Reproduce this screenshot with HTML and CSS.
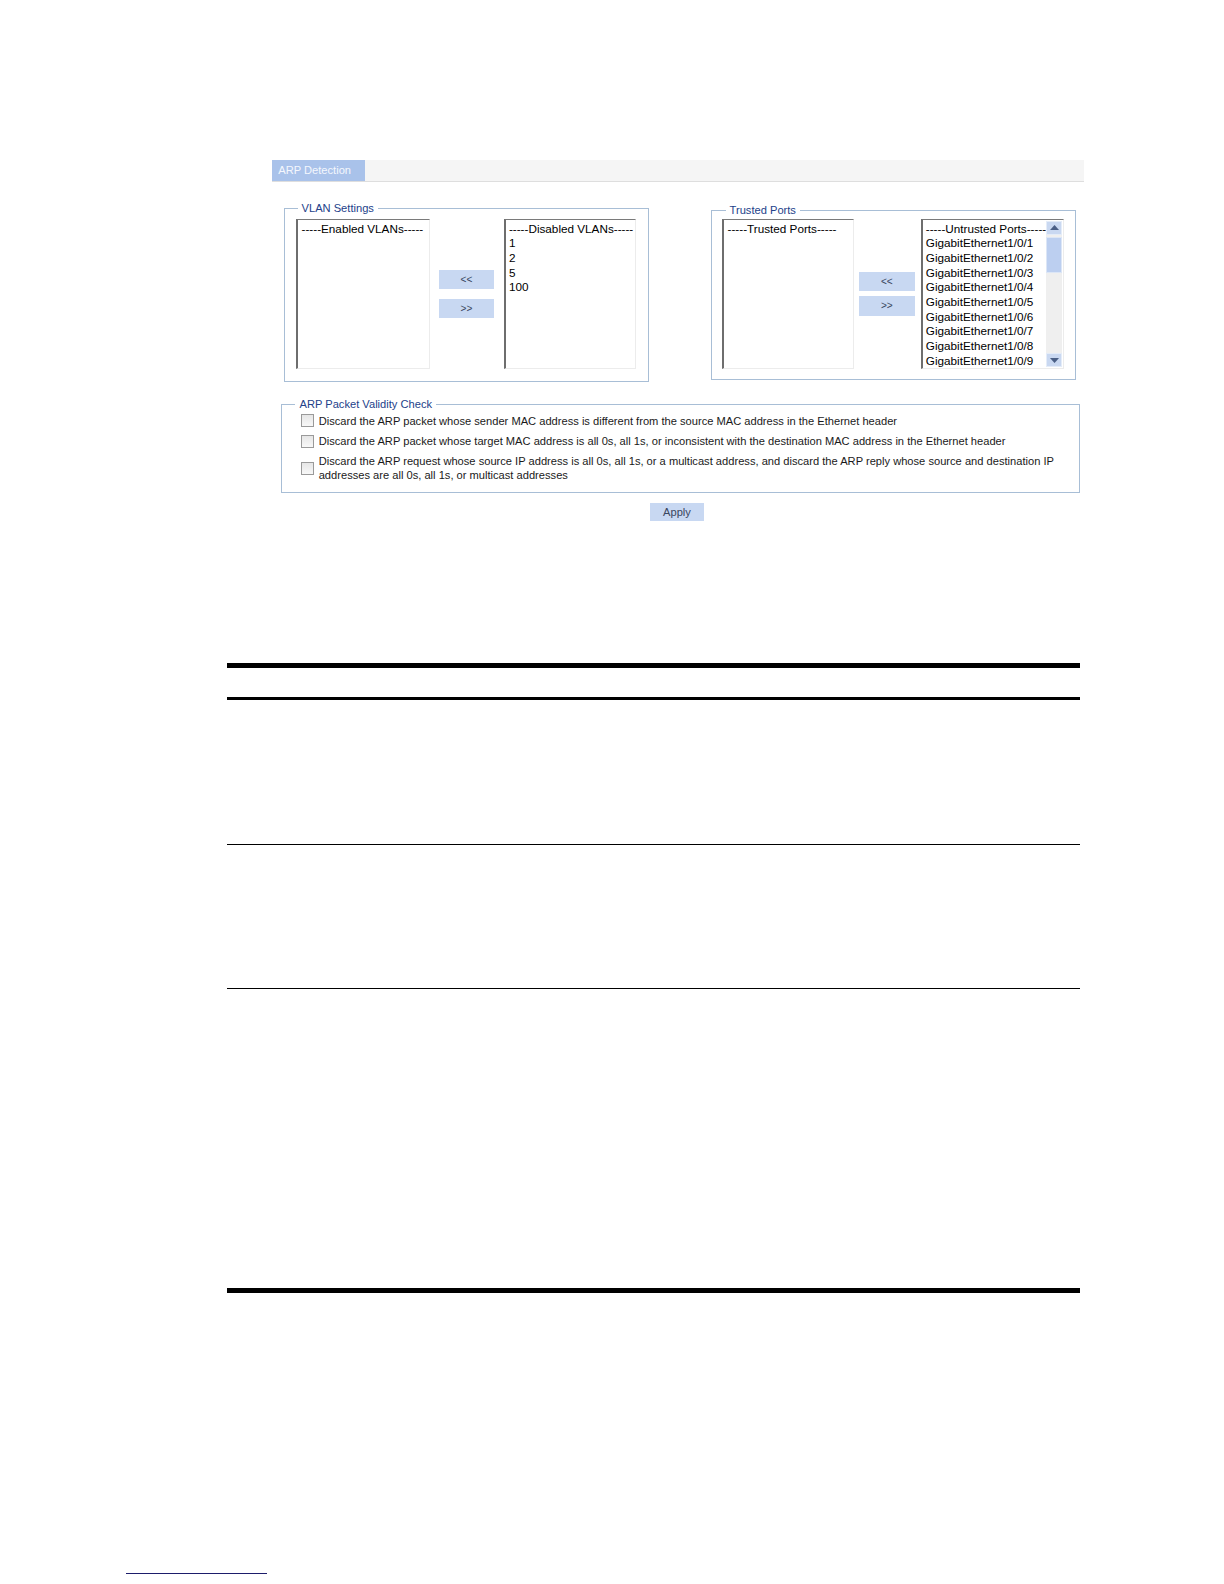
FILE: index.html
```html
<!DOCTYPE html>
<html>
<head>
<meta charset="utf-8">
<title>ARP Detection</title>
<link rel="stylesheet" href="styles.css">
</head>
<body>
<div class="page">
  <div class="panel">
    <div class="tabbar"><div class="tab">ARP Detection</div></div>

    <div class="settings-row">
      <fieldset class="group vlan">
        <legend>VLAN Settings</legend>
        <div class="transfer transfer-vlan">
          <div class="listbox lb-vlan-left">
            <div class="items"><div>-----Enabled VLANs-----</div></div>
          </div>
          <div class="movers movers-vlan">
            <button class="btn move">&lt;&lt;</button>
            <button class="btn move">&gt;&gt;</button>
          </div>
          <div class="listbox lb-vlan-right">
            <div class="items">
              <div>-----Disabled VLANs-----</div>
              <div>1</div>
              <div>2</div>
              <div>5</div>
              <div>100</div>
            </div>
          </div>
        </div>
      </fieldset>

      <fieldset class="group trusted">
        <legend>Trusted Ports</legend>
        <div class="transfer transfer-ports">
          <div class="listbox lb-port-left">
            <div class="items"><div>-----Trusted Ports-----</div></div>
          </div>
          <div class="movers movers-ports">
            <button class="btn move">&lt;&lt;</button>
            <button class="btn move">&gt;&gt;</button>
          </div>
          <div class="listbox lb-port-right">
            <div class="items">
              <div>-----Untrusted Ports-----</div>
              <div>GigabitEthernet1/0/1</div>
              <div>GigabitEthernet1/0/2</div>
              <div>GigabitEthernet1/0/3</div>
              <div>GigabitEthernet1/0/4</div>
              <div>GigabitEthernet1/0/5</div>
              <div>GigabitEthernet1/0/6</div>
              <div>GigabitEthernet1/0/7</div>
              <div>GigabitEthernet1/0/8</div>
              <div>GigabitEthernet1/0/9</div>
            </div>
            <div class="scrollbar">
              <div class="sb-btn"><svg width="9" height="5" viewBox="0 0 9 5"><polygon points="0,5 9,5 4.5,0" fill="#4a5f86"/></svg></div>
              <div class="sb-track">
                <div class="sb-thumb"></div>
              </div>
              <div class="sb-btn"><svg width="9" height="5" viewBox="0 0 9 5"><polygon points="0,0 9,0 4.5,5" fill="#4a5f86"/></svg></div>
            </div>
          </div>
        </div>
      </fieldset>
    </div>

    <fieldset class="group validity">
      <legend>ARP Packet Validity Check</legend>
      <div class="checks">
        <div class="check-row">
          <span class="checkbox"></span>
          <span class="check-label">Discard the ARP packet whose sender MAC address is different from the source MAC address in the Ethernet header</span>
        </div>
        <div class="check-row">
          <span class="checkbox"></span>
          <span class="check-label">Discard the ARP packet whose target MAC address is all 0s, all 1s, or inconsistent with the destination MAC address in the Ethernet header</span>
        </div>
        <div class="check-row">
          <span class="checkbox"></span>
          <span class="check-label">Discard the ARP request whose source IP address is all 0s, all 1s, or a multicast address, and discard the ARP reply whose source and destination IP addresses are all 0s, all 1s, or multicast addresses</span>
        </div>
      </div>
    </fieldset>

    <div class="actions"><button class="btn apply">Apply</button></div>
  </div>

  <div class="doc-table">
    <div class="doc-head"></div>
    <div class="doc-row r1"></div>
    <div class="doc-row r2"></div>
    <div class="doc-row r3"></div>
  </div>

  <div class="footnote-rule"></div>
</div>
</body>
</html>
```

FILE: styles.css
```css
html, body {
  margin: 0;
  padding: 0;
  background: #ffffff;
}

body {
  font-family: "Liberation Sans", Arial, sans-serif;
  color: #000;
}

.page {
  zoom: 1.012;
  padding-top: 158px;
  padding-bottom: 0;
}

.panel {
  margin-left: 269px;
  width: 802px;
}

/* tab bar */
.tabbar {
  height: 21px;
  background: #f5f5f5;
  border-bottom: 1px solid #dedede;
  display: flex;
}

.tab {
  width: 86px;
  padding-left: 6px;
  background: #a9c2ea;
  color: #f4f7fd;
  font-size: 11px;
  line-height: 21px;
}

/* group boxes */
fieldset.group {
  margin: 0;
  padding: 0;
  border: 1px solid #a8bed6;
  min-width: 0;
}

fieldset.group legend {
  font-size: 11px;
  line-height: 13px;
  color: #23428a;
  padding: 0 4px;
}

.settings-row {
  display: flex;
  align-items: flex-start;
  margin-top: 20px;
}

.vlan {
  width: 358px;
  margin-left: 12px !important;
}

.vlan legend {
  margin-left: 12px;
}

.trusted {
  width: 358px;
  margin-left: 62px !important;
  margin-top: 2px !important;
}

.trusted legend {
  margin-left: 13px;
}

.transfer {
  display: flex;
  align-items: center;
}

.transfer-vlan {
  padding: 3px 11px 12px 11px;
}

.transfer-ports {
  padding: 1px 10px 10px 10px;
}

/* list boxes */
.listbox {
  height: 147px;
  background: #fff;
  border-top: 1px solid #7a7a7a;
  border-left: 2px solid #6e6e6e;
  border-right: 1px solid #ececec;
  border-bottom: 1px solid #ececec;
  display: flex;
  overflow: hidden;
  font-size: 11.6px;
  line-height: 14.5px;
}

.listbox .items {
  flex: 1;
  padding: 2px 2px 0 3px;
  white-space: nowrap;
  overflow: hidden;
}

.lb-vlan-left { width: 129px; }
.lb-vlan-right { width: 128px; }
.lb-port-left { width: 127px; }
.lb-port-right { width: 139px; }

.movers {
  display: flex;
  flex-direction: column;
}

.movers-vlan {
  margin: 0 10px 0 9px;
  gap: 10px;
}

.movers-ports {
  margin: 0 6px 0 5px;
  gap: 5px;
}

.btn {
  border: 0;
  margin: 0;
  padding: 0;
  background: #c8d8f2;
  font-family: "Liberation Sans", Arial, sans-serif;
  color: #3a4660;
  cursor: pointer;
}

.move {
  width: 54px;
  height: 19px;
  font-size: 10px;
  line-height: 19px;
}

.movers-ports .move {
  width: 55px;
}

/* scrollbar */
.scrollbar {
  flex: 0 0 16px;
  width: 16px;
  margin: 1px 1px 1px 0;
  display: flex;
  flex-direction: column;
  background: #f0f0f0;
}

.sb-btn {
  height: 14px;
  background: #c9d8f1;
  border: 1px solid #e4ecf8;
  display: flex;
  align-items: center;
  justify-content: center;
  box-sizing: border-box;
}

.sb-track {
  flex: 1;
  padding-top: 2px;
  background: #efefef;
}

.sb-thumb {
  height: 36px;
  background: #bccff0;
  border: 1px solid #dce6f6;
  box-sizing: border-box;
}

/* validity check */
.validity {
  width: 787px;
  margin-top: 15px !important;
  margin-left: 9px !important;
}

.validity legend {
  margin-left: 13px;
}

.checks {
  padding: 3px 10px 9px 18px;
  display: flex;
  flex-direction: column;
  gap: 6px;
}

.check-row {
  display: flex;
  align-items: center;
  font-size: 11px;
  line-height: 14px;
  color: #1a1a1a;
}

.checkbox {
  flex: 0 0 auto;
  width: 11px;
  height: 11px;
  border: 1px solid #9a9a9a;
  background: linear-gradient(#e6e6e6, #f8f8f8);
  margin-right: 5px;
}

.check-label {
  flex: 1;
}

/* apply */
.actions {
  display: flex;
  justify-content: center;
  margin-top: 10px;
  padding-right: 2px;
}

.apply {
  width: 54px;
  height: 18px;
  font-size: 11px;
  line-height: 18px;
}

/* document table rules */
.doc-table {
  margin-left: 224px;
  width: 843px;
  margin-top: 140px;
  border-top: 5px solid #000;
}

.doc-head {
  height: 29px;
  border-bottom: 3px solid #000;
}

.doc-row {
  border-bottom: 1px solid #000;
}

.r1 { height: 142px; }
.r2 { height: 142px; }
.r3 {
  height: 295px;
  border-bottom: 5px solid #000;
}

.footnote-rule {
  margin-left: 125px;
  margin-top: 277px;
  width: 139px;
  height: 1px;
  background: #1d1d6b;
}
```
